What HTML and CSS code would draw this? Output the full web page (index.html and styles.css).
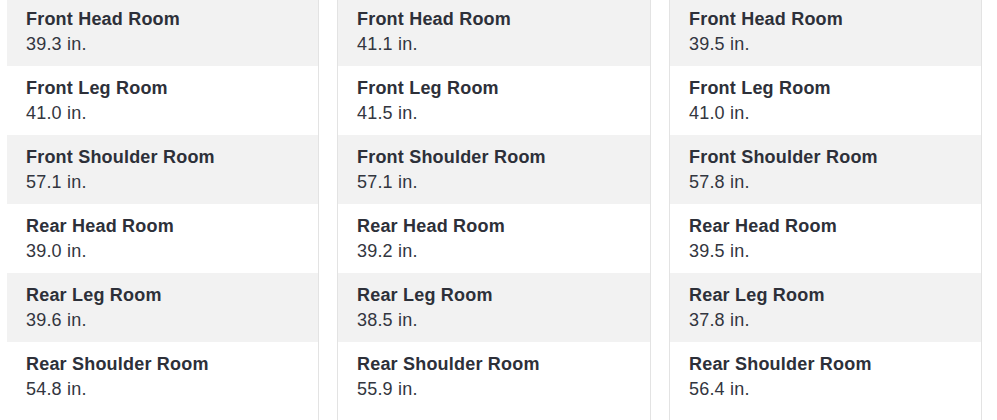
FILE: index.html
```html
<!DOCTYPE html>
<html>
<head>
<meta charset="utf-8">
<link rel="stylesheet" href="styles.css">
</head>
<body>
<div class="specs">
  <div class="col col-first">
    <div class="row"><div class="label">Front Head Room</div><div class="value">39.3 in.</div></div>
    <div class="row"><div class="label">Front Leg Room</div><div class="value">41.0 in.</div></div>
    <div class="row"><div class="label">Front Shoulder Room</div><div class="value">57.1 in.</div></div>
    <div class="row"><div class="label">Rear Head Room</div><div class="value">39.0 in.</div></div>
    <div class="row"><div class="label">Rear Leg Room</div><div class="value">39.6 in.</div></div>
    <div class="row"><div class="label">Rear Shoulder Room</div><div class="value">54.8 in.</div></div>
  </div>
  <div class="col col-mid">
    <div class="row"><div class="label">Front Head Room</div><div class="value">41.1 in.</div></div>
    <div class="row"><div class="label">Front Leg Room</div><div class="value">41.5 in.</div></div>
    <div class="row"><div class="label">Front Shoulder Room</div><div class="value">57.1 in.</div></div>
    <div class="row"><div class="label">Rear Head Room</div><div class="value">39.2 in.</div></div>
    <div class="row"><div class="label">Rear Leg Room</div><div class="value">38.5 in.</div></div>
    <div class="row"><div class="label">Rear Shoulder Room</div><div class="value">55.9 in.</div></div>
  </div>
  <div class="col col-last">
    <div class="row"><div class="label">Front Head Room</div><div class="value">39.5 in.</div></div>
    <div class="row"><div class="label">Front Leg Room</div><div class="value">41.0 in.</div></div>
    <div class="row"><div class="label">Front Shoulder Room</div><div class="value">57.8 in.</div></div>
    <div class="row"><div class="label">Rear Head Room</div><div class="value">39.5 in.</div></div>
    <div class="row"><div class="label">Rear Leg Room</div><div class="value">37.8 in.</div></div>
    <div class="row"><div class="label">Rear Shoulder Room</div><div class="value">56.4 in.</div></div>
  </div>
</div>
</body>
</html>
```
FILE: styles.css
```css
html, body {
  margin: 0;
  padding: 0;
  background: #ffffff;
  overflow: hidden;
}

body {
  font-family: "Liberation Sans", Arial, sans-serif;
  font-size: 18px;
  line-height: 25px;
  color: #2d3039;
}

.specs {
  display: grid;
  grid-template-columns: 312px 314px 313px;
  column-gap: 18px;
  margin-top: -3px;
  padding-left: 7px;
}

.col {
  border-right: 1px solid #e3e3e3;
  padding-bottom: 9px;
}

.col-mid,
.col-last {
  border-left: 1px solid #e3e3e3;
}

.row {
  padding: 10px 10px 9px 19px;
}

.row:nth-child(odd) {
  background: #f2f2f2;
}

.label {
  font-weight: bold;
  letter-spacing: 0.2px;
}

.value {
  color: #333640;
  letter-spacing: 0.2px;
}
```
